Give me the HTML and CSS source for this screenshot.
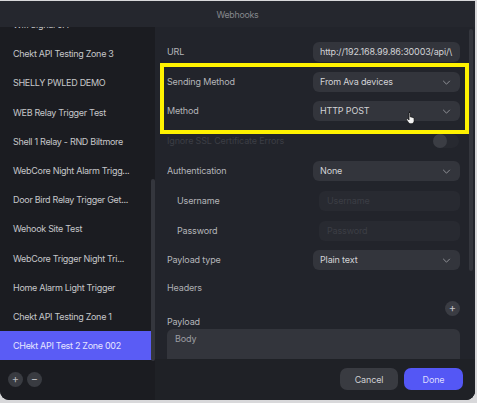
FILE: index.html
```html
<!DOCTYPE html>
<html>
<head>
<meta charset="utf-8">
<link rel="stylesheet" href="styles.css">
</head>
<body>
<div class="window">
  <div class="titlebar">Webhooks</div>
  <div class="main">
    <div class="sidebar">
      <div class="list-viewport">
        <ul class="list">
          <li>Wifi Signal 0A</li>
          <li>Chekt API Testing Zone 3</li>
          <li>SHELLY PWLED DEMO</li>
          <li>WEB Relay Trigger Test</li>
          <li>Shell 1 Relay - RND Biltmore</li>
          <li>WebCore Night Alarm Trigg...</li>
          <li>Door Bird Relay Trigger Get...</li>
          <li>Wehook Site Test</li>
          <li>WebCore Trigger Night Tri...</li>
          <li>Home Alarm Light Trigger</li>
          <li>Chekt API Testing Zone 1</li>
          <li class="selected">CHekt API Test 2 Zone 002</li>
        </ul>
        <div class="sb-thumb"></div>
      </div>
      <div class="sidebar-footer">
        <span class="round-btn">+</span>
        <span class="round-btn">&minus;</span>
      </div>
    </div>
    <div class="panel">
      <div class="form">
        <div class="row"><span class="label">URL</span><span class="field">http://192.168.99.86:30003/api/\</span></div>
        <div class="row"><span class="label">Sending Method</span><span class="field select">From Ava devices<svg class="chev" viewBox="0 0 10 6"><path d="M1 1l4 4 4-4"/></svg></span></div>
        <div class="row"><span class="label">Method</span><span class="field select">HTTP POST<svg class="chev" viewBox="0 0 10 6"><path d="M1 1l4 4 4-4"/></svg></span></div>
        <div class="row"><span class="label dim">Ignore SSL Certificate Errors</span><span class="toggle-cell"><span class="toggle"><span class="knob"></span></span></span></div>
        <div class="row"><span class="label">Authentication</span><span class="field select">None<svg class="chev" viewBox="0 0 10 6"><path d="M1 1l4 4 4-4"/></svg></span></div>
        <div class="row sub"><span class="label">Username</span><span class="field disabled">Username</span></div>
        <div class="row sub"><span class="label">Password</span><span class="field disabled">Password</span></div>
        <div class="row"><span class="label">Payload type</span><span class="field select">Plain text<svg class="chev" viewBox="0 0 10 6"><path d="M1 1l4 4 4-4"/></svg></span></div>
        <div class="headers">Headers</div>
        <div class="add-row"><span class="round-btn small">+</span></div>
        <div class="payload-label">Payload</div>
        <div class="textarea">Body</div>
      </div>
      <div class="footer">
        <button class="btn cancel">Cancel</button>
        <button class="btn done">Done</button>
      </div>
      <div class="panel-thumb"></div>
    </div>
  </div>
  <div class="highlight"></div>
  <svg class="cursor" viewBox="0 0 12 14"><path d="M3.5 1.2c.7 0 1.1.5 1.1 1.1v4l.3-.1c.6-.2 1.1.1 1.300.5.5-.2 1.1 0 1.3.5.6-.2 1.2.1 1.3.7l.1 2.6c0 1.8-1.3 3.3-3.2 3.3H5c-1 0-1.7-.5-2.3-1.3L.9 9.9c-.4-.6-.2-1.2.3-1.5.5-.3 1-.1 1.3.3l.8 1V2.3c0-.6.4-1.1 1.2-1.1z"/></svg>
</div>
</body>
</html>
```
FILE: styles.css
```css
* { box-sizing: border-box; margin: 0; padding: 0; }
html, body { width: 477px; height: 403px; overflow: hidden; }
body {
  background: #d8d8da;
  font-family: Inter, "Noto Sans", sans-serif;
  font-size: 9px;
  letter-spacing: -0.15px;
  color: #c9cacd;
}
.window {
  position: relative;
  width: 475px;
  height: 399px;
  margin-top: 1px;
  background: #22242b;
  border-radius: 0 0 9px 9px;
  overflow: hidden;
  display: flex;
  flex-direction: column;
}
.titlebar {
  height: 26px;
  flex: none;
  background: #25272e;
  color: #85878d;
  text-align: center;
  line-height: 27px;
  font-size: 8.8px;
  letter-spacing: -0.25px;
  position: relative;
  z-index: 2;
}
.main { flex: 1; display: flex; min-height: 0; }
.sidebar {
  width: 155px;
  flex: none;
  background: #1b1c21;
  display: flex;
  flex-direction: column;
}
.list-viewport {
  position: relative;
  height: 334px;
  overflow: hidden;
}
.list { list-style: none; margin-top: -17px; margin-right: 3px; letter-spacing: -0.3px; }
.list li {
  height: 29.2px;
  line-height: 29.2px;
  padding-left: 13px;
  white-space: nowrap;
  overflow: hidden;
  color: #c6c7ca;
}
.list li.selected { background: #5a5cf5; color: #e6e6ff; }
.sb-thumb {
  position: absolute;
  right: 0;
  top: 152px;
  width: 4px;
  height: 182px;
  background: #34363d;
  border-radius: 2px;
}
.sidebar-footer {
  flex: 1;
  display: flex;
  align-items: center;
  gap: 4px;
  padding-left: 8px;
  padding-bottom: 3px;
}
.round-btn {
  width: 15px;
  height: 15px;
  border-radius: 50%;
  background: #393b41;
  color: #b8b9bd;
  font-size: 11px;
  line-height: 15px;
  text-align: center;
  letter-spacing: 0;
}
.panel {
  position: relative;
  flex: 1;
  display: flex;
  flex-direction: column;
  background: #22242b;
  min-width: 0;
}
.form {
  flex: 1;
  overflow: hidden;
  padding: 10px 15px 0 12px;
}
.row {
  height: 29.8px;
  display: grid;
  grid-template-columns: 1fr 147px;
  align-items: center;
}
.row.sub { grid-template-columns: 1fr 141px; }
.row.sub .label { padding-left: 10px; }
.label { color: #b4b5b9; white-space: nowrap; line-height: 11px; padding-bottom: 1px; }
.label.dim { color: #3c3e45; }
.field {
  height: 20px;
  border-radius: 6px;
  background: #33353c;
  color: #d2d3d6;
  line-height: 20px;
  padding-left: 7px;
  white-space: nowrap;
  overflow: hidden;
  position: relative;
}
.field.disabled { background: #282a31; color: #3c3e45; padding-left: 8px; }
.chev {
  position: absolute;
  right: 9px;
  top: 8px;
  width: 9px;
  height: 5px;
  fill: none;
  stroke: #8f9197;
  stroke-width: 1.2;
}
.toggle-cell { display: flex; justify-content: flex-end; padding-right: 1px; }
.toggle {
  width: 26px;
  height: 14px;
  border-radius: 7px;
  background: #272930;
  display: flex;
  align-items: center;
}
.knob { width: 14px; height: 14px; border-radius: 50%; background: #3b3d44; }
.headers { height: 26px; line-height: 25px; color: #adaeb2; }
.add-row { height: 15px; display: flex; justify-content: flex-end; align-items: center; }
.round-btn.small { width: 15px; height: 15px; background: #3a3c43; color: #c4c5c9; }
.payload-label { height: 12px; line-height: 11px; color: #b4b5b9; }
.textarea {
  margin-top: 1px;
  height: 40px;
  border-radius: 6px;
  background: #33353c;
  color: #9d9ea3;
  padding: 4px 8px;
}
.footer {
  height: 41px;
  flex: none;
  background: #1f2126;
  display: flex;
  justify-content: flex-end;
  align-items: center;
  gap: 6px;
  padding-right: 12px;
  padding-bottom: 1px;
}
.btn {
  height: 22px;
  border: none;
  border-radius: 7px;
  font-family: Inter, "Noto Sans", sans-serif;
  font-size: 9px;
  letter-spacing: -0.15px;
}
.cancel { width: 58px; background: #393b41; color: #cfd0d3; }
.done { width: 59px; background: #5457f5; color: #dcdcff; }
.panel-thumb {
  position: absolute;
  right: 2px;
  top: 2px;
  width: 4px;
  height: 242px;
  background: #34363d;
  border-radius: 2px;
}
.highlight {
  position: absolute;
  left: 160px;
  top: 62px;
  width: 309px;
  height: 71px;
  border: 4px solid #fff200;
}
.cursor {
  position: absolute;
  left: 406px;
  top: 110px;
  width: 11px;
  height: 13px;
  fill: #f2f2f2;
  stroke: #111;
  stroke-width: 0.8;
}
```
